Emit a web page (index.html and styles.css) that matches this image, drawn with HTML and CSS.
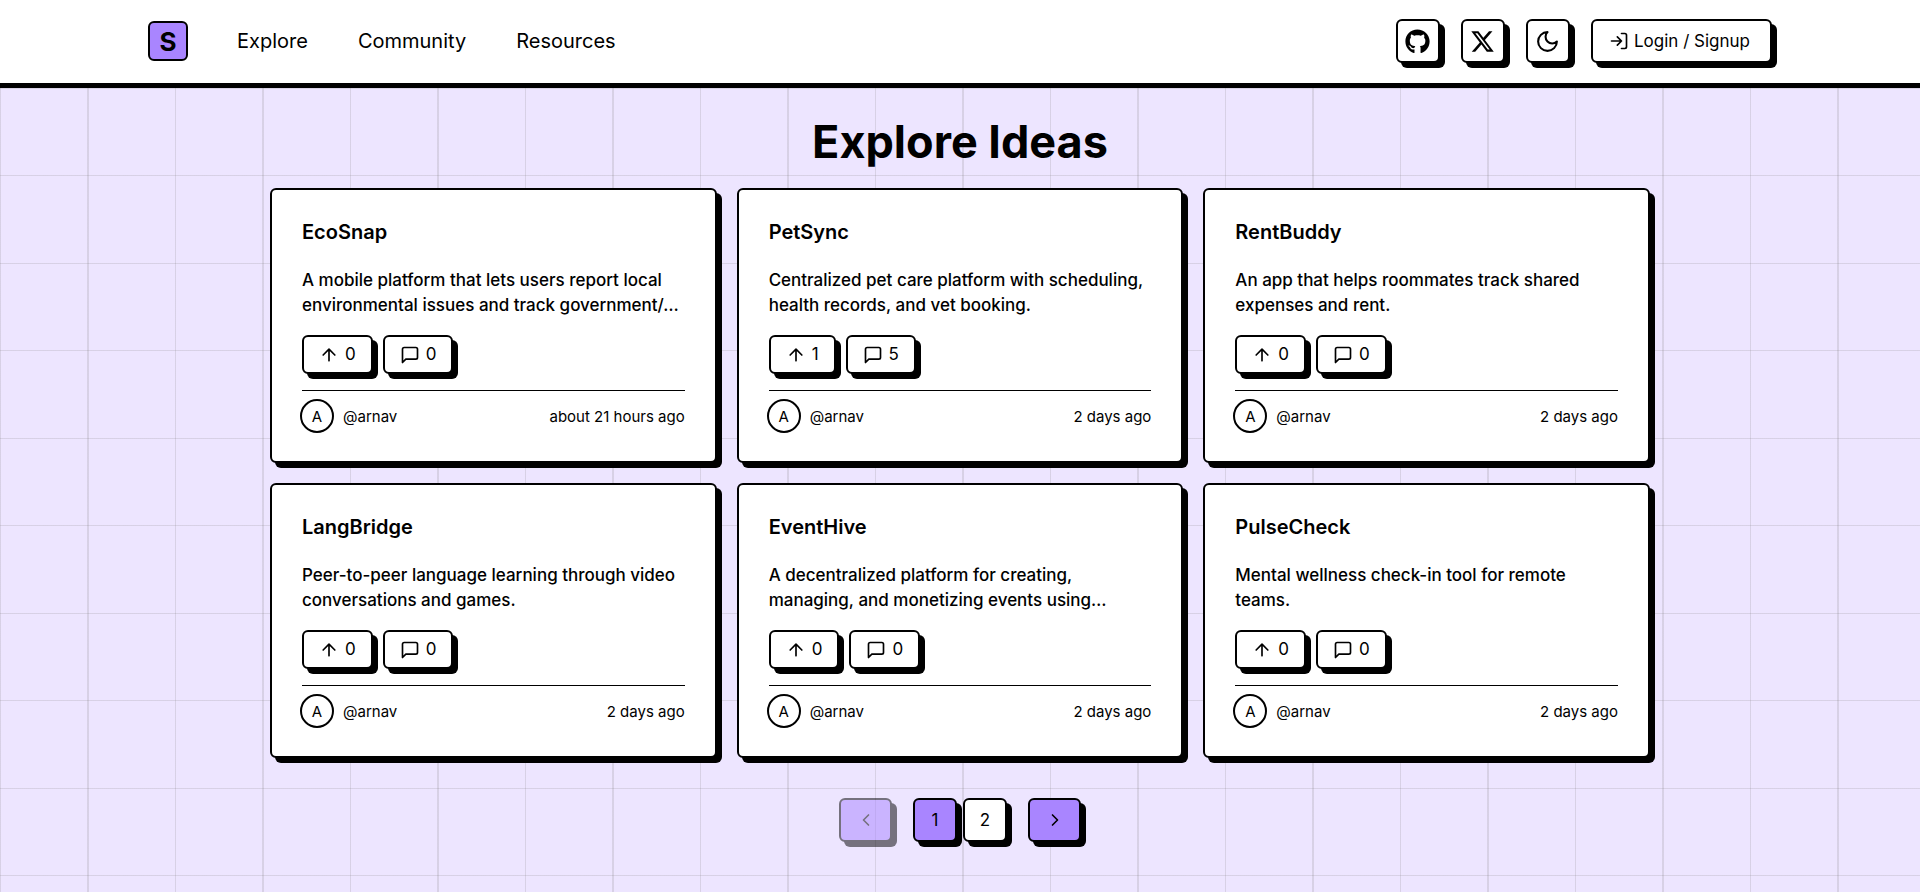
FILE: index.html
```html
<!DOCTYPE html>
<html lang="en">
<head>
<meta charset="utf-8">
<meta name="viewport" content="width=device-width, initial-scale=1">
<title>Explore Ideas</title>
<link rel="stylesheet" href="styles.css">
</head>
<body>
<svg class="sprite" aria-hidden="true">
  <symbol id="arrow-up" viewBox="0 0 24 24"><path d="m5 12 7-7 7 7M12 19V5"/></symbol>
  <symbol id="message" viewBox="0 0 24 24"><path d="M21 15a2 2 0 0 1-2 2H7l-4 4V5a2 2 0 0 1 2-2h14a2 2 0 0 1 2 2z"/></symbol>
</svg>
<header class="topbar">
  <a class="logo" href="#" aria-label="Home">S</a>
  <nav class="nav">
    <a href="#">Explore</a>
    <a href="#">Community</a>
    <a href="#">Resources</a>
  </nav>
  <div class="actions">
    <a class="btn square" href="#" aria-label="GitHub"><svg class="brand" viewBox="0 0 496 512"><path d="M165.9 397.4c0 2-2.3 3.6-5.2 3.6-3.3.3-5.6-1.3-5.6-3.6 0-2 2.3-3.6 5.2-3.6 3-.3 5.6 1.3 5.6 3.6zM244.8 8C106.1 8 0 113.3 0 252c0 110.9 69.8 205.8 169.5 239.2 12.8 2.3 17.3-5.6 17.3-12.1 0-6.2-.3-40.4-.3-61.4 0 0-70 15-84.7-29.8 0 0-11.4-29.1-27.8-36.6 0 0-22.9-15.7 1.6-15.4 0 0 24.9 2 38.6 25.8 21.9 38.6 58.6 27.5 72.9 20.9 2.3-16 8.8-27.1 16-33.7-55.9-6.2-112.3-14.3-112.3-110.5 0-27.5 7.6-41.3 23.6-58.9-2.6-6.5-11.1-33.3 2.6-67.9 20.9-6.5 69 27 69 27 20-5.6 41.5-8.5 62.8-8.5s42.8 2.9 62.8 8.5c0 0 48.1-33.6 69-27 13.7 34.7 5.2 61.4 2.6 67.9 16 17.7 25.8 31.5 25.8 58.9 0 96.500-58.900 104.200-114.800 110.500 9.200 7.900 17 22.900 17 46.400 0 33.700-.3 75.400-.3 83.600 0 6.500 4.600 14.400 17.300 12.100C428.200 457.800 496 362.900 496 252 496 113.300 383.500 8 244.800 8z"/></svg></a>
    <a class="btn square" href="#" aria-label="X"><svg class="brand" viewBox="0 0 512 512"><path d="M389.2 48h70.6L305.6 224.2 487 464H345L233.7 318.6 106.5 464H35.8L200.700 275.500 26.800 48H172.400L272.900 180.900 389.200 48zM364.400 421.800h39.100L151.100 88h-42L364.400 421.800z"/></svg></a>
    <button class="btn square" type="button" aria-label="Toggle theme"><svg class="line large" viewBox="0 0 24 24"><path d="M12 3a6 6 0 0 0 9 9 9 9 0 1 1-9-9Z"/></svg></button>
    <button class="btn login" type="button"><svg class="line" viewBox="0 0 24 24"><path d="M15 3h4a2 2 0 0 1 2 2v14a2 2 0 0 1-2 2h-4M10 17l5-5-5-5M15 12H3"/></svg>Login / Signup</button>
  </div>
</header>
<main class="page">
  <h1 class="title">Explore Ideas</h1>
  <section class="cards">
    <article class="card">
      <h2 class="name">EcoSnap</h2>
      <p class="about">A mobile platform that lets users report local environmental issues and track government/…</p>
      <div class="stats">
        <button class="btn stat" type="button" aria-label="Upvotes"><svg class="line" viewBox="0 0 24 24"><use href="#arrow-up"/></svg>0</button>
        <button class="btn stat" type="button" aria-label="Comments"><svg class="line" viewBox="0 0 24 24"><use href="#message"/></svg>0</button>
      </div>
      <footer class="meta"><span class="avatar">A</span><span>@arnav</span><time class="when">about 21 hours ago</time></footer>
    </article>
    <article class="card">
      <h2 class="name">PetSync</h2>
      <p class="about">Centralized pet care platform with scheduling, health records, and vet booking.</p>
      <div class="stats">
        <button class="btn stat" type="button" aria-label="Upvotes"><svg class="line" viewBox="0 0 24 24"><use href="#arrow-up"/></svg>1</button>
        <button class="btn stat" type="button" aria-label="Comments"><svg class="line" viewBox="0 0 24 24"><use href="#message"/></svg>5</button>
      </div>
      <footer class="meta"><span class="avatar">A</span><span>@arnav</span><time class="when">2 days ago</time></footer>
    </article>
    <article class="card">
      <h2 class="name">RentBuddy</h2>
      <p class="about">An app that helps roommates track shared expenses and rent.</p>
      <div class="stats">
        <button class="btn stat" type="button" aria-label="Upvotes"><svg class="line" viewBox="0 0 24 24"><use href="#arrow-up"/></svg>0</button>
        <button class="btn stat" type="button" aria-label="Comments"><svg class="line" viewBox="0 0 24 24"><use href="#message"/></svg>0</button>
      </div>
      <footer class="meta"><span class="avatar">A</span><span>@arnav</span><time class="when">2 days ago</time></footer>
    </article>
    <article class="card">
      <h2 class="name">LangBridge</h2>
      <p class="about">Peer-to-peer language learning through video conversations and games.</p>
      <div class="stats">
        <button class="btn stat" type="button" aria-label="Upvotes"><svg class="line" viewBox="0 0 24 24"><use href="#arrow-up"/></svg>0</button>
        <button class="btn stat" type="button" aria-label="Comments"><svg class="line" viewBox="0 0 24 24"><use href="#message"/></svg>0</button>
      </div>
      <footer class="meta"><span class="avatar">A</span><span>@arnav</span><time class="when">2 days ago</time></footer>
    </article>
    <article class="card">
      <h2 class="name">EventHive</h2>
      <p class="about">A decentralized platform for creating, managing, and monetizing events using…</p>
      <div class="stats">
        <button class="btn stat" type="button" aria-label="Upvotes"><svg class="line" viewBox="0 0 24 24"><use href="#arrow-up"/></svg>0</button>
        <button class="btn stat" type="button" aria-label="Comments"><svg class="line" viewBox="0 0 24 24"><use href="#message"/></svg>0</button>
      </div>
      <footer class="meta"><span class="avatar">A</span><span>@arnav</span><time class="when">2 days ago</time></footer>
    </article>
    <article class="card">
      <h2 class="name">PulseCheck</h2>
      <p class="about">Mental wellness check-in tool for remote teams.</p>
      <div class="stats">
        <button class="btn stat" type="button" aria-label="Upvotes"><svg class="line" viewBox="0 0 24 24"><use href="#arrow-up"/></svg>0</button>
        <button class="btn stat" type="button" aria-label="Comments"><svg class="line" viewBox="0 0 24 24"><use href="#message"/></svg>0</button>
      </div>
      <footer class="meta"><span class="avatar">A</span><span>@arnav</span><time class="when">2 days ago</time></footer>
    </article>
  </section>
  <nav class="pager" aria-label="Pages">
    <button class="btn step" type="button" aria-label="Previous page" disabled><svg class="line" viewBox="0 0 24 24"><path d="m15 18-6-6 6-6"/></svg></button>
    <div class="numbers">
      <button class="btn square current" type="button" aria-current="page">1</button>
      <button class="btn square" type="button">2</button>
    </div>
    <button class="btn step" type="button" aria-label="Next page"><svg class="line" viewBox="0 0 24 24"><path d="m9 18 6-6-6-6"/></svg></button>
  </nav>
</main>
</body>
</html>
```

FILE: styles.css
```css
:root {
  --main: #a985ff;
  --line: rgba(128, 128, 128, 0.2);
}

* {
  box-sizing: border-box;
}

body {
  margin: 0;
  min-height: 100vh;
  display: flex;
  flex-direction: column;
  font-family: Inter, "Liberation Sans", sans-serif;
  font-size: 17px;
  font-weight: 400;
  line-height: 25px;
  color: #000;
}

h1, h2, p {
  margin: 0;
}

a {
  color: inherit;
  text-decoration: none;
}

.sprite {
  display: none;
}

.topbar {
  display: flex;
  align-items: center;
  min-height: 88px;
  padding: 0 148px 1px;
  background: #fff;
  border-bottom: 5px solid #000;
}

.logo {
  display: flex;
  align-items: center;
  justify-content: center;
  width: 40px;
  height: 40px;
  border: 2px solid #000;
  border-radius: 6px;
  background: var(--main);
  font-size: 26px;
  font-weight: 700;
}

.nav {
  display: flex;
  gap: 50px;
  margin-left: 49px;
  font-size: 20px;
}

.actions {
  display: flex;
  gap: 21px;
  margin-left: auto;
}

.btn {
  display: inline-flex;
  align-items: center;
  justify-content: center;
  height: 44px;
  padding: 0;
  border: 2px solid #000;
  border-radius: 6px;
  background: #fff;
  box-shadow: 5px 5px 0 #000;
  color: #000;
  font: inherit;
}

.square {
  width: 44px;
}

.login {
  gap: 5px;
  padding: 0 20px 0 16px;
}

.brand {
  width: 25px;
  height: 25px;
}

.line {
  width: 20px;
  height: 20px;
  fill: none;
  stroke: #000;
  stroke-width: 2;
  stroke-linecap: round;
  stroke-linejoin: round;
}

.line.large {
  width: 25px;
  height: 25px;
}

.page {
  flex: 1;
  display: flex;
  flex-direction: column;
  align-items: center;
  padding: 28px 20px 40px;
  background-color: #ede5ff;
  background-image:
    linear-gradient(90deg, var(--line) 1px, transparent 1px 87px, var(--line) 87px 89px, transparent 89px),
    linear-gradient(var(--line) 1px, transparent 1px 87px, var(--line) 87px 88px, transparent 88px);
  background-size: 175px 175px;
}

.title {
  font-size: 45px;
  font-weight: 700;
  line-height: 52px;
}

.cards {
  display: grid;
  grid-template-columns: repeat(3, minmax(0, 1fr));
  gap: 20px;
  width: 100%;
  max-width: 1380px;
  margin-top: 20px;
}

.card {
  display: flex;
  flex-direction: column;
  padding: 30px 30px 28px;
  border: 2px solid #000;
  border-radius: 6px;
  background: #fff;
  box-shadow: 5px 5px 0 #000;
}

.name {
  font-size: 20px;
  font-weight: 600;
  line-height: 25px;
}

.about {
  margin: 23px 0 17px;
  font-weight: 500;
}

.stats {
  display: flex;
  gap: 10px;
}

.stat {
  gap: 6px;
  height: 39px;
  padding: 0 15px;
}

.meta {
  display: flex;
  align-items: center;
  gap: 9px;
  margin-top: 16px;
  padding-top: 8px;
  border-top: 1px solid #000;
  font-size: 15px;
}

.avatar {
  display: flex;
  align-items: center;
  justify-content: center;
  width: 34px;
  height: 34px;
  margin-left: -2px;
  border: 2px solid #000;
  border-radius: 50%;
}

.when {
  margin-left: auto;
}

.pager {
  display: flex;
  gap: 21px;
  margin-top: 40px;
}

.numbers {
  display: flex;
  gap: 6px;
}

.step {
  width: 53px;
  background: var(--main);
}

.step:disabled {
  opacity: 0.5;
}

.current {
  background: var(--main);
}
```
